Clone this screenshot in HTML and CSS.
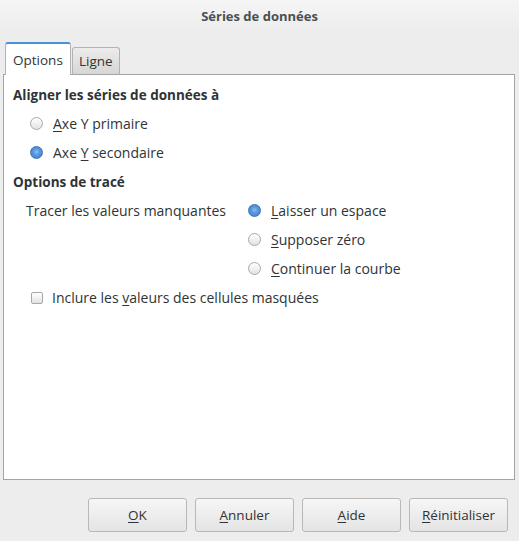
FILE: index.html
```html
<!DOCTYPE html>
<html lang="fr">
<head>
<meta charset="utf-8">
<title>Séries de données</title>
<link rel="stylesheet" href="styles.css">
</head>
<body>
<div class="window">
  <div class="titlebar">Séries de données</div>
  <div class="content">
    <div class="tabs">
      <div class="tab active">Options</div>
      <div class="tab">Ligne</div>
    </div>
    <div class="panel">
      <div class="heading">Aligner les séries de données à</div>
      <div class="group">
        <div class="row"><span class="radio"></span><span><u>A</u>xe Y primaire</span></div>
        <div class="row"><span class="radio checked"></span><span>Axe <u>Y</u> secondaire</span></div>
      </div>
      <div class="heading h2">Options de tracé</div>
      <div class="plot">
        <div class="plot-label">Tracer les valeurs manquantes</div>
        <div class="plot-options">
          <div class="row"><span class="radio checked"></span><span><u>L</u>aisser un espace</span></div>
          <div class="row"><span class="radio"></span><span><u>S</u>upposer zéro</span></div>
          <div class="row"><span class="radio"></span><span><u>C</u>ontinuer la courbe</span></div>
        </div>
      </div>
      <div class="row check-row"><span class="checkbox"></span><span>Inclure les <u>v</u>aleurs des cellules masquées</span></div>
    </div>
    <div class="buttons">
      <button class="btn"><u>O</u>K</button>
      <button class="btn"><u>A</u>nnuler</button>
      <button class="btn"><u>A</u>ide</button>
      <button class="btn"><u>R</u>éinitialiser</button>
    </div>
  </div>
</div>
</body>
</html>
```
FILE: styles.css
```css
* { box-sizing: border-box; }
html, body { margin: 0; padding: 0; }
body {
  width: 519px;
  height: 541px;
  background: #ededed;
  font-family: "Open Sans", "DejaVu Sans", sans-serif;
  font-size: 14px;
  color: #2e3436;
  overflow: hidden;
}
u { text-decoration: underline; text-underline-offset: 2px; text-decoration-thickness: 1px; }
.titlebar {
  height: 31px;
  display: flex;
  align-items: center;
  justify-content: center;
  font-weight: 700;
  font-size: 13px;
  color: #4a5052;
  background: linear-gradient(#f5f5f5, #ededed);
}
.content { padding: 11px 5px 0 3px; }
.tabs {
  display: flex;
  align-items: flex-end;
  padding-left: 2px;
  height: 33px;
  position: relative;
  z-index: 1;
  margin-bottom: -1px;
}
.tab {
  height: 27px;
  padding: 0 6px;
  display: flex;
  align-items: center;
  border: 1px solid #b3b3b3;
  border-bottom: none;
  border-radius: 3px 3px 0 0;
  background: linear-gradient(#ececec, #d6d6d6);
  font-size: 13.5px;
  margin-bottom: 1px;
}
.tab.active {
  height: 33px;
  width: 66px;
  padding: 0 7px;
  background: #fff;
  border-color: #b3b3b3;
  border-top: 2px solid #4a90d9;
  margin-right: 1px;
  margin-bottom: 0;
}
.panel {
  height: 406px;
  width: 512px;
  background: #fff;
  border: 1px solid #a4a4a4;
  padding: 10px 0 0 9px;
}
.heading { font-weight: 700; font-size: 13.5px; height: 20px; line-height: 20px; }
.group { padding-left: 17px; }
.row {
  display: flex;
  align-items: center;
  height: 29px;
  gap: 10px;
}
.group .row:first-child { margin-top: 4px; }
.h2 { margin-top: 5px; }
.plot { display: flex; padding-left: 13px; margin-top: 4px; }
.plot-label { height: 29px; line-height: 29px; width: 222px; }
.radio {
  width: 13px;
  height: 13px;
  border-radius: 50%;
  border: 1px solid #a8a8a8;
  background: linear-gradient(#ffffff, #e2e2e2);
  flex: none;
}
.radio.checked {
  border-color: #3b72b0;
  background: radial-gradient(circle at 50% 45%, #8fc0f2 0, #5c9ae0 35%, #3a7bcf 100%);
}
.check-row { padding-left: 18px; gap: 9px; }
.checkbox {
  width: 12px;
  height: 12px;
  border: 1px solid #a8a8a8;
  border-radius: 2px;
  background: linear-gradient(#ffffff, #e2e2e2);
  flex: none;
}
.buttons {
  display: flex;
  justify-content: flex-end;
  gap: 8px;
  padding: 18px 6px 0 0;
}
.btn {
  width: 99px;
  height: 34px;
  border: 1px solid #b8b8b8;
  border-radius: 3px;
  background: linear-gradient(#f6f6f6, #e4e4e4);
  font-family: inherit;
  font-size: 13.5px;
  color: #2e3436;
  padding: 0;
}
```
